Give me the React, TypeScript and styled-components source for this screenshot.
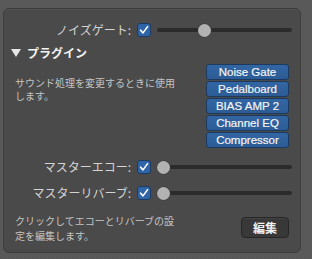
import React from "react";
import styled, { createGlobalStyle } from "styled-components";

const Global = createGlobalStyle`
  html, body {
    margin: 0;
    padding: 0;
    width: 312px;
    height: 259px;
    overflow: hidden;
    background: repeating-conic-gradient(#5c5c5c 0 25%, #565656 0 50%) 0 0 / 2px 2px;
    font-family: "Noto Sans CJK JP", "Noto Sans", sans-serif;
  }
`;

const Page = styled.div`
  padding: 8px 0 0 3px;
`;

const Panel = styled.div`
  box-sizing: border-box;
  width: 298px;
  height: 245px;
  background: #4a4a4a;
  border: 1px solid #3c3c3c;
  border-radius: 6px;
  box-shadow: inset 0 1px 0 rgba(255, 255, 255, 0.04);
  display: flex;
  flex-direction: column;
  padding-top: 14px;
`;

const ControlRow = styled.div<{ $mt?: number }>`
  display: grid;
  grid-template-columns: 127px 14px 1fr;
  column-gap: 6px;
  align-items: center;
  height: 14px;
  padding-right: 8px;
  margin-top: ${(p) => p.$mt ?? 0}px;
`;

const Label = styled.span`
  text-align: right;
  font-size: 12px;
  line-height: 14px;
  color: #d4d4d4;
  white-space: nowrap;
`;

const Check = styled.span`
  box-sizing: border-box;
  width: 14px;
  height: 14px;
  border-radius: 3px;
  background: #2f64a6;
  border: 1px solid #1d3b62;
  display: flex;
  align-items: center;
  justify-content: center;
`;

const SliderWrap = styled.div`
  position: relative;
  height: 14px;
`;

const Track = styled.div`
  position: absolute;
  left: 0;
  right: 0;
  top: 5px;
  height: 4px;
  border-radius: 2px;
  background: #2b2b2b;
`;

const Knob = styled.div`
  position: absolute;
  top: 0.5px;
  width: 13px;
  height: 13px;
  border-radius: 50%;
  background: #b2b2b2;
  box-shadow: 0 0 0 0.5px #3a3a3a;
`;

const Header = styled.div`
  display: flex;
  align-items: center;
  gap: 6px;
  height: 15px;
  margin-top: 8px;
  padding-left: 7px;
  font-size: 12px;
  font-weight: 700;
  color: #f2f2f2;
`;

const Triangle = styled.span`
  width: 0;
  height: 0;
  border-left: 5px solid transparent;
  border-right: 5px solid transparent;
  border-top: 8px solid #e6e6e6;
`;

const PluginSection = styled.div`
  display: flex;
  justify-content: space-between;
  align-items: flex-start;
  margin-top: 4px;
  padding: 0 11px 0 11px;
`;

const Description = styled.p<{ $lh: number; $mt: number }>`
  margin: ${(p) => p.$mt}px 0 0 0;
  width: 165px;
  font-size: 10px;
  line-height: ${(p) => p.$lh}px;
  color: #c4c4c4;
`;

const ButtonStack = styled.div`
  display: flex;
  flex-direction: column;
  gap: 1px;
  width: 83px;
`;

const PluginButton = styled.div`
  box-sizing: border-box;
  height: 16px;
  border-radius: 3px;
  background: linear-gradient(#3266a3, #2c5c95);
  border: 1px solid #1c3a60;
  color: #f4f4f4;
  font-family: "Liberation Sans", Arial, sans-serif;
  font-size: 11.5px;
  line-height: 14px;
  text-align: center;
  white-space: nowrap;
  -webkit-text-stroke: 0.2px #f4f4f4;
`;

const Footer = styled.div`
  display: flex;
  justify-content: space-between;
  align-items: flex-start;
  margin-top: 13px;
  padding: 0 11px 0 11px;
`;

const EditButton = styled.div`
  box-sizing: border-box;
  margin-top: 4px;
  width: 48px;
  height: 21px;
  border-radius: 4px;
  background: #383838;
  border: 1px solid #262626;
  box-shadow: inset 0 1px 0 rgba(255, 255, 255, 0.06);
  color: #f2f2f2;
  font-size: 12px;
  font-weight: 700;
  line-height: 19px;
  text-align: center;
`;

const CheckMark = () => (
  <svg width="10" height="10" viewBox="0 0 10 10">
    <path d="M1.6 5.2 L4 7.9 L8.6 1.6" fill="none" stroke="#ffffff" strokeWidth="1.6" strokeLinecap="round" strokeLinejoin="round" />
  </svg>
);

const Slider = ({ value }: { value: number }) => (
  <SliderWrap>
    <Track />
    <Knob style={{ left: `calc(${value * 100}% - ${value * 13}px)` }} />
  </SliderWrap>
);

const CheckRow = ({ label, value, mt }: { label: string; value: number; mt?: number }) => (
  <ControlRow $mt={mt}>
    <Label>{label}</Label>
    <Check>
      <CheckMark />
    </Check>
    <Slider value={value} />
  </ControlRow>
);

const plugins = ["Noise Gate", "Pedalboard", "BIAS AMP 2", "Channel EQ", "Compressor"];

export default function App() {
  return (
    <>
      <Global />
      <Page>
        <Panel>
          <CheckRow label="ノイズゲート:" value={0.34} />
          <Header>
            <Triangle />
            <span>プラグイン</span>
          </Header>
          <PluginSection>
            <Description $lh={13} $mt={12}>サウンド処理を変更するときに使用します。</Description>
            <ButtonStack>
              {plugins.map((p) => (
                <PluginButton key={p}>{p}</PluginButton>
              ))}
            </ButtonStack>
          </PluginSection>
          <CheckRow label="マスターエコー:" value={0} mt={12} />
          <CheckRow label="マスターリバーブ:" value={0} mt={12} />
          <Footer>
            <Description $lh={15} $mt={0}>クリックしてエコーとリバーブの設定を編集します。</Description>
            <EditButton>編集</EditButton>
          </Footer>
        </Panel>
      </Page>
    </>
  );
}
